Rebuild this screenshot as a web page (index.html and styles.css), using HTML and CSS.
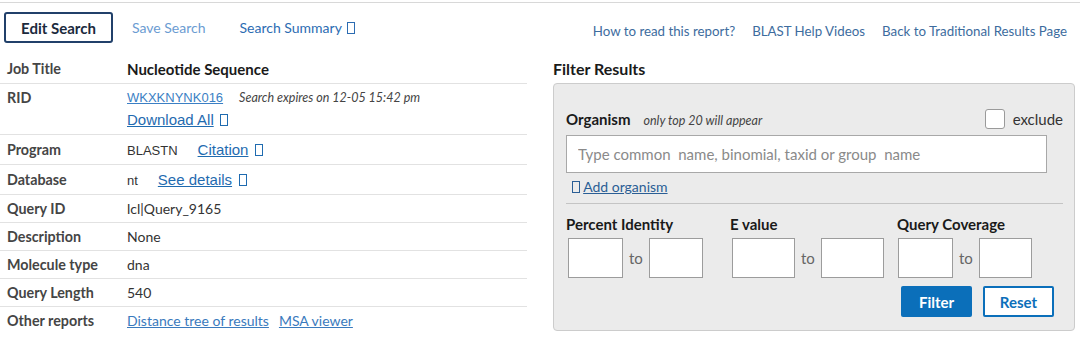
FILE: index.html
```html
<!DOCTYPE html>
<html lang="en">
<head>
    <meta charset="UTF-8">
    <meta name="viewport" content="width=device-width, initial-scale=1.0">
    <title>BLAST Results</title>
    <link rel="stylesheet" href="styles.css">
</head>
<body>
    <div class="topbar">
        <div class="actions">
            <button class="edit-btn">Edit Search</button>
            <a class="save-link" href="#">Save Search</a>
            <a class="summary-link" href="#">Search Summary <span class="tofu"></span></a>
        </div>
        <div class="help-links">
            <a href="#">How to read this report?</a>
            <a href="#">BLAST Help Videos</a>
            <a href="#">Back to Traditional Results Page</a>
        </div>
    </div>

    <div class="main">
        <div class="summary">
            <div class="row">
                <div class="label">Job Title</div>
                <div class="value title">Nucleotide Sequence</div>
            </div>
            <div class="row rid">
                <div class="label">RID</div>
                <div class="value">
                    <div class="rid-line"><a class="rid-link" href="#">WKXKNYNK016</a><span class="expires">Search expires on 12-05 15:42 pm</span></div>
                    <div class="dl-line"><a class="arial-link" href="#">Download All</a> <span class="tofu"></span></div>
                </div>
            </div>
            <div class="row tall">
                <div class="label">Program</div>
                <div class="value"><span class="arial">BLASTN</span><a class="arial-link spaced" href="#">Citation</a> <span class="tofu"></span></div>
            </div>
            <div class="row tall">
                <div class="label">Database</div>
                <div class="value"><span class="arial">nt</span><a class="arial-link spaced" href="#">See details</a> <span class="tofu"></span></div>
            </div>
            <div class="row">
                <div class="label">Query ID</div>
                <div class="value">lcl|Query_9165</div>
            </div>
            <div class="row">
                <div class="label">Description</div>
                <div class="value">None</div>
            </div>
            <div class="row">
                <div class="label">Molecule type</div>
                <div class="value">dna</div>
            </div>
            <div class="row">
                <div class="label">Query Length</div>
                <div class="value">540</div>
            </div>
            <div class="row last">
                <div class="label">Other reports</div>
                <div class="value"><a class="report-link" href="#">Distance tree of results</a><a class="report-link" href="#">MSA viewer</a></div>
            </div>
        </div>

        <div class="filter">
            <h2>Filter Results</h2>
            <div class="filter-box">
                <div class="org-head">
                    <div><span class="org-label">Organism</span><span class="org-note">only top 20 will appear</span></div>
                    <label class="exclude"><span class="check"></span>exclude</label>
                </div>
                <input class="org-input" type="text" placeholder="Type common  name, binomial, taxid or group  name">
                <div class="add-org"><span class="tofu"></span> <a href="#">Add organism</a></div>

                <div class="ranges">
                    <div class="range range-pi">
                        <div class="range-label">Percent Identity</div>
                        <div class="range-inputs">
                            <input class="num w55" type="text">
                            <span class="to">to</span>
                            <input class="num w54" type="text">
                        </div>
                    </div>
                    <div class="range range-e">
                        <div class="range-label">E value</div>
                        <div class="range-inputs">
                            <input class="num w63" type="text">
                            <span class="to">to</span>
                            <input class="num w63" type="text">
                        </div>
                    </div>
                    <div class="range range-qc">
                        <div class="range-label">Query Coverage</div>
                        <div class="range-inputs">
                            <input class="num w55" type="text">
                            <span class="to">to</span>
                            <input class="num w53" type="text">
                        </div>
                    </div>
                </div>

                <div class="buttons">
                    <button class="filter-btn">Filter</button>
                    <button class="reset-btn">Reset</button>
                </div>
            </div>
        </div>
    </div>
</body>
</html>
```

FILE: styles.css
```css
body {
    margin: 0;
    padding-top: 2px;
    font-family: Lato, "Open Sans", sans-serif;
    font-size: 14px;
    color: #212121;
    background: #fff;
}
a {
    text-decoration: none;
}
.tofu {
    display: inline-block;
    width: 6px;
    height: 10px;
    border: 1.5px solid currentColor;
    vertical-align: -1px;
}

/* top bar */
.topbar {
    border-top: 1px solid #d8d8d8;
    display: flex;
    justify-content: space-between;
    align-items: flex-start;
    padding: 9px 13px 0 4px;
    height: 45px;
    box-sizing: border-box;
}
.actions {
    display: flex;
    align-items: center;
}
.edit-btn {
    font-family: Lato, sans-serif;
    font-weight: bold;
    font-size: 15px;
    color: #1b2a3d;
    background: #fff;
    border: 2px solid #21406a;
    border-radius: 3px;
    width: 109px;
    height: 31px;
    padding: 0;
}
.save-link {
    margin-left: 19px;
    color: #6b9cd2;
    font-size: 14px;
}
.summary-link {
    margin-left: 34px;
    color: #2c6cb2;
    font-size: 14px;
}
.summary-link .tofu {
    margin-left: 2px;
}
.help-links {
    display: flex;
    gap: 17px;
    padding-top: 11px;
}
.help-links a {
    color: #3d6c9e;
    font-size: 13.3px;
}

/* layout */
.main {
    display: flex;
    margin-top: 8px;
}
.summary {
    width: 527px;
    flex-shrink: 0;
}
.filter {
    margin-left: 26px;
    width: 522px;
    margin-top: 4px;
}

/* summary table */
.row {
    display: flex;
    border-bottom: 1px solid #e2e2e2;
    padding: 4px 0;
    line-height: 19px;
}
.row.rid {
    padding-bottom: 2px;
}
.row.last {
    border-bottom: none;
}
.row.tall {
    line-height: 21px;
    padding: 4px 0 3px;
}
.row .tofu {
    margin-left: 3px;
}
.label {
    width: 120px;
    padding-left: 7px;
    flex-shrink: 0;
    font-weight: bold;
    font-size: 14.3px;
    color: #454545;
}
.value {
    color: #333;
}
.value.title {
    font-weight: bold;
    color: #1a1a1a;
    font-size: 15px;
    line-height: 20px;
}
.rid-line {
    line-height: 18px;
}
.dl-line {
    line-height: 24px;
    padding-top: 1px;
    color: #1f6bb0;
}
.rid-link {
    font-family: "Liberation Sans", Arial, sans-serif;
    font-size: 13px;
    color: #3b7fc4;
    text-decoration: underline;
}
.expires {
    font-style: italic;
    font-size: 12.5px;
    color: #444;
    margin-left: 16px;
}
.arial {
    font-family: "Liberation Sans", Arial, sans-serif;
    font-size: 13px;
}
.arial-link {
    font-family: "Liberation Sans", Arial, sans-serif;
    font-size: 15px;
    color: #1f6bb0;
    text-decoration: underline;
}
.arial-link.spaced {
    margin-left: 20px;
}
.row.tall .value {
    color: #1f6bb0;
}
.row.tall .arial {
    color: #333;
}
.report-link {
    color: #3a7abd;
    text-decoration: underline;
    margin-right: 10px;
}

/* filter panel */
.filter h2 {
    margin: 0;
    font-size: 16px;
    line-height: 20px;
    color: #1a1a1a;
}
.filter-box {
    margin-top: 4px;
    background: #ebebeb;
    border: 1px solid #cccccc;
    border-radius: 4px;
    padding: 24px 11px 11px 12px;
    height: 248px;
    box-sizing: border-box;
}
.org-head {
    display: flex;
    justify-content: space-between;
    align-items: center;
    height: 22px;
}
.org-label {
    font-weight: bold;
    font-size: 15px;
    color: #1a1a1a;
}
.org-note {
    font-style: italic;
    font-size: 12.5px;
    color: #444;
    margin-left: 13px;
}
.exclude {
    display: flex;
    align-items: center;
    font-size: 15px;
    color: #333;
    line-height: 20px;
}
.check {
    width: 18px;
    height: 18px;
    background: #fff;
    border: 1px solid #9a9a9a;
    border-radius: 3px;
    margin-right: 8px;
}
.org-input {
    display: block;
    margin-top: 5px;
    width: 481px;
    height: 38px;
    box-sizing: border-box;
    border: 1px solid #a8a8a8;
    padding: 0 11px;
    font-family: Lato, sans-serif;
    font-size: 15px;
}
.org-input::placeholder {
    color: #8a8a8a;
}
.add-org {
    padding: 4px 0 0 6px;
    line-height: 20px;
    color: #2a5e95;
}
.add-org a {
    color: #2a5e95;
    text-decoration: underline;
}
.ranges {
    margin-top: 6px;
    border-top: 1px solid #c4c4c4;
    display: flex;
    padding-top: 10px;
}
.range-pi {
    width: 164px;
}
.range-e {
    width: 167px;
}
.range-label {
    font-weight: bold;
    font-size: 15px;
    line-height: 20px;
    color: #1a1a1a;
}
.range-inputs {
    display: flex;
    align-items: center;
    gap: 6px;
    margin-top: 4px;
    padding-left: 2px;
}
.range-qc .range-inputs {
    padding-left: 1px;
}
.num {
    height: 40px;
    box-sizing: border-box;
    border: 1px solid #9c9c9c;
    background: #fff;
    padding: 0;
}
.w53 { width: 53px; }
.w54 { width: 54px; }
.w55 { width: 55px; }
.w63 { width: 63px; }
.to {
    font-size: 15px;
    color: #666;
}
.buttons {
    display: flex;
    justify-content: flex-end;
    gap: 11px;
    margin-top: 8px;
    padding-right: 9px;
}
.buttons button {
    font-family: Lato, sans-serif;
    font-weight: bold;
    font-size: 15px;
    width: 71px;
    height: 31px;
    border-radius: 2px;
    padding: 0;
}
.filter-btn {
    background: #0b6fba;
    color: #fff;
    border: none;
}
.reset-btn {
    background: #fff;
    color: #0b6fba;
    border: 2px solid #0b6fba;
}
```
